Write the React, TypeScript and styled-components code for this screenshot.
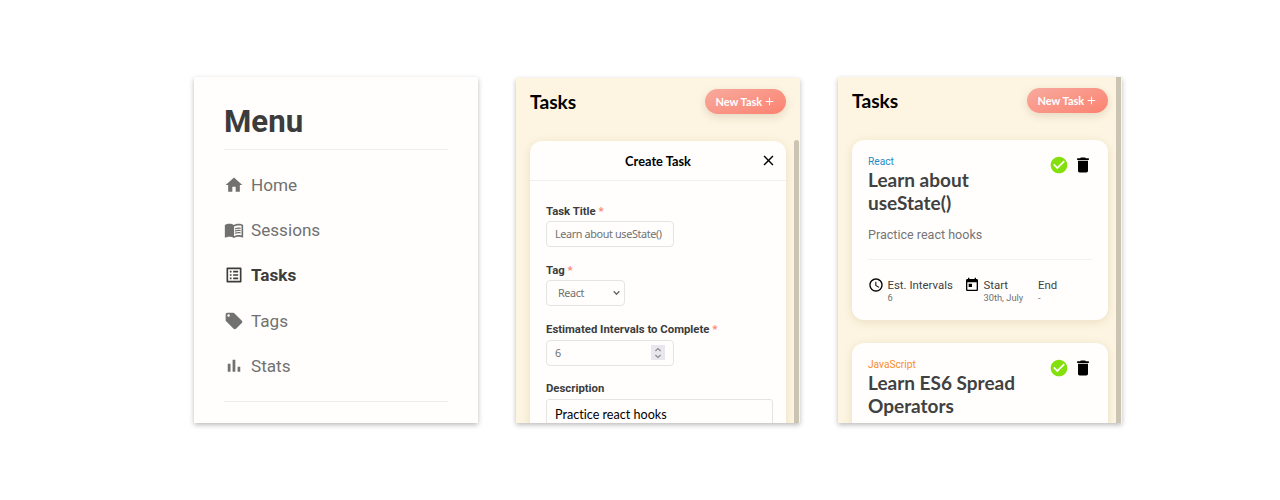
import React from "react";
import styled, { createGlobalStyle } from "styled-components";
import {
  MdHome,
  MdMenuBook,
  MdListAlt,
  MdLocalOffer,
  MdCheckCircle,
  MdDelete,
  MdAccessTime,
  MdToday,
  MdClose,
  MdAdd,
} from "react-icons/md";

const lato = `Lato, "Open Sans", sans-serif`;
const roboto = `Roboto, "Liberation Sans", sans-serif`;

const GlobalStyle = createGlobalStyle`
  * { box-sizing: border-box; }
  body { margin: 0; background: #fff; font-family: ${roboto}; }
  h1, h2, h3, p { margin: 0; }
  svg { display: block; flex: none; }
`;

const Page = styled.main`
  display: flex;
  gap: 38px;
  width: 1280px;
  height: 500px;
  padding: 77px 0 0 194px;
  overflow: hidden;
`;

const Panel = styled.section<{ $cream?: boolean; $top?: number }>`
  width: 284px;
  height: ${(p) => 346 - (p.$top ?? 0)}px;
  margin-top: ${(p) => p.$top ?? 0}px;
  flex: none;
  display: flex;
  background: ${(p) => (p.$cream ? "#fdf5e2" : "#fffefc")};
  box-shadow: 0 2px 5px rgba(0, 0, 0, 0.27);
  overflow: hidden;
`;

const MenuBody = styled.nav`
  width: 100%;
  padding: 26px 30px 0;
`;

const MenuTitle = styled.h1`
  height: 47px;
  border-bottom: 1px solid #eeeeed;
  font-size: 31.2px;
  line-height: 37px;
  color: #3c3c3c;
`;

const MenuList = styled.div`
  height: 252px;
  padding-top: 12px;
  border-bottom: 1px solid #eeeeed;
`;

const MenuItem = styled.div<{ $active?: boolean }>`
  display: flex;
  align-items: center;
  gap: 7px;
  height: 45.4px;
  font-size: 17.15px;
  font-weight: ${(p) => (p.$active ? 700 : 400)};
  color: ${(p) => (p.$active ? "#3c3c3c" : "#717171")};
`;

const Column = styled.div`
  flex: 1;
  padding-left: 14px;
`;

const TopBar = styled.header`
  display: flex;
  justify-content: space-between;
  align-items: flex-start;
  width: 256px;
  height: 63px;
  padding-top: 11px;
`;

const Heading = styled.h2`
  font: 700 19.2px/26px ${lato};
  color: #000;
`;

const NewTask = styled.button`
  display: flex;
  align-items: center;
  gap: 1px;
  width: 81px;
  height: 25px;
  padding: 0 0 0 10.5px;
  border: 0;
  border-radius: 13px;
  background: linear-gradient(160deg, #f7aa9e, #fc8270);
  box-shadow: 0 3px 8px rgba(120, 90, 50, 0.18);
  color: #fff;
  font: 700 11px/25px ${lato};
`;

const Card = styled.article<{ $height: number }>`
  width: 256px;
  height: ${(p) => p.$height}px;
  border-radius: 12px;
  background: #fffefd;
  box-shadow: 0 2px 10px rgba(130, 95, 30, 0.15);
`;

const NextCard = styled.div`
  padding-top: 23.5px;
`;

const Track = styled.div<{ $top: number; $round?: boolean }>`
  width: 5px;
  margin: ${(p) => p.$top}px 1px 0 0;
  border-radius: ${(p) => (p.$round ? "3px 3px 0 0" : "0")};
  background: #cbc4b3;
`;

const CardHeader = styled.header`
  display: grid;
  grid-template-columns: 1fr auto 1fr;
  align-items: center;
  height: 40px;
  padding: 0 9px;
  border-bottom: 1px solid #f0f0ef;
  color: #000;
  svg { justify-self: end; }
`;

const CardHeading = styled.h3`
  grid-column: 2;
  font: 700 12.8px/18px ${lato};
`;

const Form = styled.form`
  padding: 22.6px 13px 0 16px;
`;

const Field = styled.div`
  height: 59.1px;
`;

const Label = styled.label`
  display: block;
  height: 17.8px;
  font-size: 11.35px;
  font-weight: 700;
  line-height: 14.6px;
  color: #3c3c3c;
`;

const Required = styled.span`
  color: #fb8575;
`;

const Control = styled.div<{ $width: number; $inset?: number }>`
  display: flex;
  align-items: center;
  justify-content: space-between;
  width: ${(p) => p.$width}px;
  height: 26px;
  padding: 0 8px 0 ${(p) => p.$inset ?? 8}px;
  border: 1px solid #e4e4e3;
  border-radius: 4px;
  background: #fffefd;
  color: #707070;
  font: 400 10.8px/24px "Noto Sans", sans-serif;
  letter-spacing: -0.36px;
  white-space: nowrap;
`;

const Chevron = styled.svg`
  margin-right: -4px;
`;

const TextArea = styled.div`
  width: 227px;
  height: 60px;
  padding: 5px 8px;
  border: 1px solid #e4e4e3;
  border-radius: 3px;
  color: #000;
  font: 400 12.6px/19px ${lato};
  font-variant-ligatures: none;
`;

const Spinner = styled.span`
  display: grid;
  place-items: center;
  width: 14px;
  height: 15px;
  background: #e8e7ee;
`;

const TaskBody = styled.div`
  display: grid;
  grid-template-columns: 1fr auto;
  padding: 15px 15px 0 16px;
`;

const Tag = styled.p<{ $color: string }>`
  font-size: 10.2px;
  line-height: 14px;
  color: ${(p) => p.$color};
`;

const TaskTitle = styled.h3`
  width: 165px;
  font: 700 19px/23px ${lato};
  color: #414141;
  margin-top: -1px;
`;

const Actions = styled.div`
  display: flex;
  gap: 4px;
  color: #000;
`;

const Summary = styled.p`
  height: 34px;
  margin: 12px 16px 0;
  border-bottom: 1px solid #f1f1f0;
  font-size: 12.55px;
  line-height: 18px;
  color: #757575;
`;

const Facts = styled.div`
  display: flex;
  padding: 17px 16px 0;
  color: #000;
`;

const Fact = styled.div<{ $width: number }>`
  display: flex;
  gap: 3.5px;
  width: ${(p) => p.$width}px;
  font-size: 11.4px;
  line-height: 16px;
  color: #3f3f3f;
  white-space: nowrap;
  svg { color: #000; }
`;

const FactValue = styled.p`
  font-size: 9.3px;
  line-height: 9px;
  color: #707070;
`;

function StatsIcon({ size }: { size: number }) {
  return (
    <svg width={size} height={size} viewBox="0 0 24 24" fill="currentColor">
      <path d="M4.5 9.2h3.3V19H4.5zM10.3 4.5h3.3V19h-3.3zM16.3 13h3.2v6h-3.2z" />
    </svg>
  );
}

const menu = [
  { label: "Home", icon: MdHome },
  { label: "Sessions", icon: MdMenuBook },
  { label: "Tasks", icon: MdListAlt, active: true },
  { label: "Tags", icon: MdLocalOffer },
  { label: "Stats", icon: StatsIcon },
];

function TasksBar() {
  return (
    <TopBar>
      <Heading>Tasks</Heading>
      <NewTask>
        New Task <MdAdd size={13} />
      </NewTask>
    </TopBar>
  );
}

function TaskTop({ tag, color, title }: { tag: string; color: string; title: string }) {
  return (
    <TaskBody>
      <div>
        <Tag $color={color}>{tag}</Tag>
        <TaskTitle>{title}</TaskTitle>
      </div>
      <Actions>
        <MdCheckCircle size={20} color="#84e00d" />
        <MdDelete size={20} />
      </Actions>
    </TaskBody>
  );
}

export default function App() {
  return (
    <>
      <GlobalStyle />
      <Page>
        <Panel>
          <MenuBody>
            <MenuTitle>Menu</MenuTitle>
            <MenuList>
              {menu.map(({ label, icon: Icon, active }) => (
                <MenuItem key={label} $active={active}>
                  <Icon size={20} />
                  {label}
                </MenuItem>
              ))}
            </MenuList>
          </MenuBody>
        </Panel>

        <Panel $cream $top={1}>
          <Column>
            <TasksBar />
            <Card $height={300}>
              <CardHeader>
                <CardHeading>Create Task</CardHeading>
                <MdClose size={17} />
              </CardHeader>
              <Form>
                <Field>
                  <Label>Task Title <Required>*</Required></Label>
                  <Control $width={128}>Learn about useState()</Control>
                </Field>
                <Field>
                  <Label>Tag <Required>*</Required></Label>
                  <Control $width={79} $inset={11}>
                    React
                    <Chevron width="7" height="6" viewBox="0 0 7 6" fill="none" stroke="#666" strokeWidth="1.3">
                      <path d="M.7 1.2 3.5 4.2 6.3 1.2" />
                    </Chevron>
                  </Control>
                </Field>
                <Field>
                  <Label>Estimated Intervals to Complete <Required>*</Required></Label>
                  <Control $width={128}>
                    6
                    <Spinner>
                      <svg width="8" height="12" viewBox="0 0 8 12" fill="none" stroke="#8b8b8f" strokeWidth="1.2">
                        <path d="M1.4 4 4 1.6 6.6 4M1.4 8 4 10.4 6.6 8" />
                      </svg>
                    </Spinner>
                  </Control>
                </Field>
                <Field>
                  <Label>Description</Label>
                  <TextArea>Practice react hooks</TextArea>
                </Field>
              </Form>
            </Card>
          </Column>
          <Track $top={62} $round />
        </Panel>

        <Panel $cream>
          <Column>
            <TasksBar />
            <Card $height={179.5}>
              <TaskTop tag="React" color="#1c8cc8" title="Learn about useState()" />
              <Summary>Practice react hooks</Summary>
              <Facts>
                <Fact $width={96}>
                  <MdAccessTime size={16} />
                  <div>Est. Intervals<FactValue>6</FactValue></div>
                </Fact>
                <Fact $width={74}>
                  <MdToday size={16} />
                  <div>Start<FactValue>30th, July</FactValue></div>
                </Fact>
                <Fact $width={40}>
                  <div>End<FactValue>-</FactValue></div>
                </Fact>
              </Facts>
            </Card>
            <NextCard>
              <Card $height={180}>
                <TaskTop tag="JavaScript" color="#fb8b1e" title="Learn ES6 Spread Operators" />
              </Card>
            </NextCard>
          </Column>
          <Track $top={0} />
        </Panel>
      </Page>
    </>
  );
}
